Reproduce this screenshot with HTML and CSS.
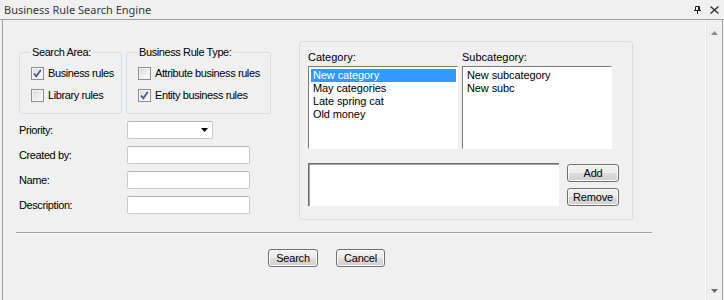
FILE: index.html
```html
<!DOCTYPE html>
<html>
<head>
<meta charset="utf-8">
<title>Business Rule Search Engine</title>
<link rel="stylesheet" href="styles.css">
</head>
<body>
<div class="window">
  <header class="titlebar">
    <span class="title">Business Rule Search Engine</span>
    <div class="tb-buttons">
      <svg class="pin" width="7" height="8" viewBox="0 0 7 8"><path d="M1.5 0.5h4v4h-4z M4.5 0.5v4" fill="none" stroke="#222" stroke-width="1"/><path d="M0 4.5h7 M3.5 4.5v3.5" fill="none" stroke="#222" stroke-width="1"/></svg>
      <svg class="close" width="9" height="8" viewBox="0 0 9 8"><path d="M0.5 0.5l8 7 M8.5 0.5l-8 7" fill="none" stroke="#333" stroke-width="1.4"/></svg>
    </div>
  </header>
  <div class="client">
    <main class="content">
      <div class="top">
        <div class="left">
          <div class="groups">
            <div class="group g-area">
              <span class="legend">Search Area:</span>
              <div class="checks">
                <label class="chk"><span class="box"><svg width="11" height="11" viewBox="0 0 11 11"><path d="M2 5.5l2.3 2.7L8.8 2" fill="none" stroke="#4b5d8f" stroke-width="1.8"/></svg></span>Business rules</label>
                <label class="chk"><span class="box"></span>Library rules</label>
              </div>
            </div>
            <div class="group g-type">
              <span class="legend">Business Rule Type:</span>
              <div class="checks">
                <label class="chk"><span class="box"></span>Attribute business rules</label>
                <label class="chk"><span class="box"><svg width="11" height="11" viewBox="0 0 11 11"><path d="M2 5.5l2.3 2.7L8.8 2" fill="none" stroke="#4b5d8f" stroke-width="1.8"/></svg></span>Entity business rules</label>
              </div>
            </div>
          </div>
          <div class="form">
            <span class="lbl">Priority:</span>
            <div class="field combo"><svg width="7" height="4" viewBox="0 0 7 4"><path d="M0 0h7L3.5 4z" fill="#000"/></svg></div>
            <span class="lbl">Created by:</span>
            <div class="field"></div>
            <span class="lbl">Name:</span>
            <div class="field"></div>
            <span class="lbl">Description:</span>
            <div class="field"></div>
          </div>
        </div>
        <div class="group g-cat">
          <div class="lists">
            <div class="col">
              <span class="cap">Category:</span>
              <ul class="list">
                <li class="sel">New category</li>
                <li>May categories</li>
                <li>Late spring cat</li>
                <li>Old money</li>
              </ul>
            </div>
            <div class="col">
              <span class="cap">Subcategory:</span>
              <ul class="list">
                <li>New subcategory</li>
                <li>New subc</li>
              </ul>
            </div>
          </div>
          <div class="edit-row">
            <div class="textbox"></div>
            <div class="side">
              <button class="btn side-btn">Add</button>
              <button class="btn side-btn">Remove</button>
            </div>
          </div>
        </div>
      </div>
      <div class="sep"></div>
      <div class="actions">
        <button class="btn b-search">Search</button>
        <button class="btn b-cancel">Cancel</button>
      </div>
    </main>
    <div class="scrollbar">
      <svg width="7" height="4" viewBox="0 0 7 4"><path d="M3.5 0L7 4H0z" fill="#8a8a8a"/></svg>
      <svg width="7" height="4" viewBox="0 0 7 4"><path d="M0 0h7L3.5 4z" fill="#6a6a6a"/></svg>
    </div>
  </div>
</div>
</body>
</html>
```

FILE: styles.css
```css
html, body {
  margin: 0;
  padding: 0;
}
body {
  background: #f0f0f0;
  font-family: "Liberation Sans", Arial, sans-serif;
  font-size: 11px;
  color: #000;
}
.window {
  width: 724px;
  height: 300px;
  display: flex;
  flex-direction: column;
  overflow: hidden;
  background: #f0f0f0;
}
.titlebar {
  height: 19px;
  flex: none;
  border-bottom: 1px solid #a0a0a0;
  display: flex;
  align-items: center;
  justify-content: space-between;
  padding-left: 4px;
}
.title {
  font-family: "Noto Sans", "Liberation Sans", sans-serif;
  font-size: 11px;
  color: #383838;
}
.tb-buttons {
  display: flex;
  align-items: center;
  gap: 9px;
  padding-right: 5px;
}
.tb-buttons svg {
  display: block;
}
.client {
  flex: 1;
  display: flex;
  margin: 0 1px 0 2px;
  border-left: 1px solid #a0a0a0;
}
.content {
  flex: 1;
  padding: 21px 0 0 13px;
}
.top {
  display: flex;
  align-items: flex-start;
}
.left {
  margin: 11px 0 0 3px;
  width: 252px;
  letter-spacing: -0.4px;
}
.groups {
  display: flex;
  gap: 4px;
}
.group {
  border: 1px solid #d5dfe5;
  border-radius: 3px;
  box-sizing: border-box;
}
.g-area {
  width: 103px;
}
.g-type {
  width: 145px;
}
.legend {
  display: block;
  width: max-content;
  margin: -7px 0 0 10px;
  padding: 0 2px;
  height: 13px;
  line-height: 13px;
  background: #f0f0f0;
}
.checks {
  padding: 8px 0 11px 11px;
  display: flex;
  flex-direction: column;
  gap: 9px;
}
.chk {
  display: flex;
  align-items: center;
  gap: 4px;
  height: 13px;
  line-height: 13px;
  white-space: nowrap;
}
.box {
  width: 13px;
  height: 13px;
  flex: none;
  box-sizing: border-box;
  border: 1px solid #8e8f8f;
  background: linear-gradient(135deg, #d8d8d8 0%, #eeeeee 60%, #ffffff 100%);
  box-shadow: inset 0 0 0 1px #f4f4f4;
  display: flex;
  align-items: center;
  justify-content: center;
}
.box svg {
  display: block;
}
.form {
  margin-top: 7px;
  display: grid;
  grid-template-columns: 108px auto;
  row-gap: 7px;
  align-items: center;
}
.lbl {
  line-height: 13px;
}
.field {
  width: 123px;
  height: 18px;
  box-sizing: border-box;
  border: 1px solid #c9c9c9;
  border-top-color: #b5b5b5;
  border-radius: 2px;
  background: #fff;
}
.combo {
  width: 86px;
  display: flex;
  align-items: center;
  justify-content: flex-end;
  padding-right: 4px;
}
.combo svg {
  display: block;
}
.g-cat {
  margin-left: 28px;
  width: 334px;
  height: 179px;
  padding: 9px 0 0 8px;
}
.lists {
  display: flex;
  gap: 4px;
}
.cap {
  display: block;
  height: 13px;
  line-height: 13px;
  margin-bottom: 2px;
}
.list {
  width: 150px;
  height: 83px;
  box-sizing: border-box;
  margin: 0;
  padding: 2px 1px 0 2px;
  list-style: none;
  background: #fff;
  border: 1px solid;
  border-color: #7a7a7a #ffffff #ffffff #7a7a7a;
}
.list li {
  line-height: 13px;
  padding-left: 2px;
  white-space: nowrap;
  letter-spacing: -0.1px;
}
.list .sel {
  background: #3399ff;
  color: #fff;
}
.edit-row {
  display: flex;
  margin-top: 14px;
  gap: 8px;
}
.textbox {
  width: 251px;
  height: 43px;
  box-sizing: border-box;
  background: #fff;
  border-top: 1px solid #6e6e6e;
  border-left: 1px solid #6e6e6e;
  box-shadow: inset 1px 1px 0 #a0a0a0;
}
.side {
  display: flex;
  flex-direction: column;
  gap: 6px;
  margin-top: 1px;
}
.btn {
  height: 18px;
  box-sizing: border-box;
  padding: 0;
  border: 1px solid #707070;
  border-radius: 3px;
  background: linear-gradient(#f2f2f2 0%, #ebebeb 50%, #dddddd 51%, #cfcfcf 100%);
  box-shadow: inset 0 0 0 1px #fbfbfb;
  font-family: "Liberation Sans", Arial, sans-serif;
  font-size: 11px;
  line-height: 14px;
  letter-spacing: -0.2px;
  color: #000;
}
.side-btn {
  width: 52px;
}
.sep {
  margin-top: 12px;
  width: 636px;
  height: 1px;
  background: #a0a0a0;
  box-shadow: 0 1px 0 #ffffff;
}
.actions {
  margin: 16px 0 0 252px;
  display: flex;
  gap: 18px;
}
.b-search {
  width: 50px;
}
.b-cancel {
  width: 49px;
}
.scrollbar {
  flex: none;
  border-left: 1px solid #fbfbfb;
  border-right: 1px solid #a0a0a0;
  box-shadow: inset 1px 0 0 #e6e6e6;
  box-sizing: border-box;
  width: 18px;
  display: flex;
  flex-direction: column;
  align-items: center;
  justify-content: space-between;
  padding: 11px 0 7px 1px;
}
.scrollbar svg {
  display: block;
}
```
